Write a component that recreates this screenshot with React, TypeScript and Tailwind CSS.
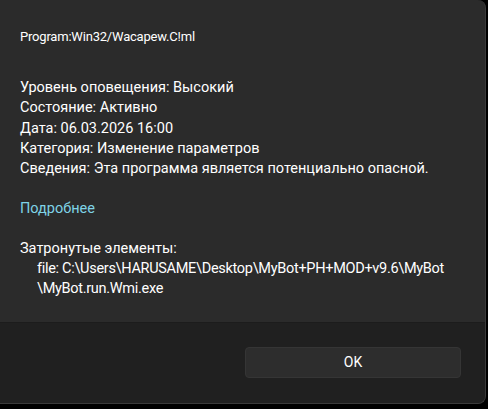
const details = [
  'Уровень оповещения: Высокий',
  'Состояние: Активно',
  'Дата: 06.03.2026 16:00',
  'Категория: Изменение параметров',
  'Сведения: Эта программа является потенциально опасной.',
];

const App = () => {
  return (
    <div className="w-[488px] h-[409px] bg-black overflow-hidden font-['Segoe_UI',Roboto,sans-serif] text-white">
      <div className="w-[486px] h-[404px] flex flex-col bg-[#2b2b2b] rounded-r-lg border-r border-b border-[#3a3a3a] overflow-hidden">
        {/* Content */}
        <div className="h-[322px] px-5 pt-[27px]">
          <p className="text-[13px] leading-[20px] tracking-[-0.2px]">Program:Win32/Wacapew.C!ml</p>

          <div className="mt-[31px] text-[14.5px] leading-[20.25px]">
            {details.map((line) => (
              <p key={line}>{line}</p>
            ))}
          </div>

          <p className="mt-[20px] text-[14.5px] leading-[20px] text-[#7fd3e6]">Подробнее</p>

          <div className="mt-[20px] text-[14.5px] leading-[20px] whitespace-nowrap">
            <p>Затронутые элементы:</p>
            <div className="pl-[17px] tracking-[-0.3px]">
              <p>file: C:\Users\HARUSAME\Desktop\MyBot+PH+MOD+v9.6\MyBot</p>
              <p>\MyBot.run.Wmi.exe</p>
            </div>
          </div>
        </div>

        {/* Footer */}
        <div className="flex-1 bg-[#202020] border-t border-[#1c1c1c] flex items-start justify-end pt-[24px] pr-[24px]">
          <button className="w-[216px] h-[31px] rounded bg-[#2d2d2d] border border-[#353535] text-[14px] text-white">
            OK
          </button>
        </div>
      </div>
    </div>
  );
};

export default App;
